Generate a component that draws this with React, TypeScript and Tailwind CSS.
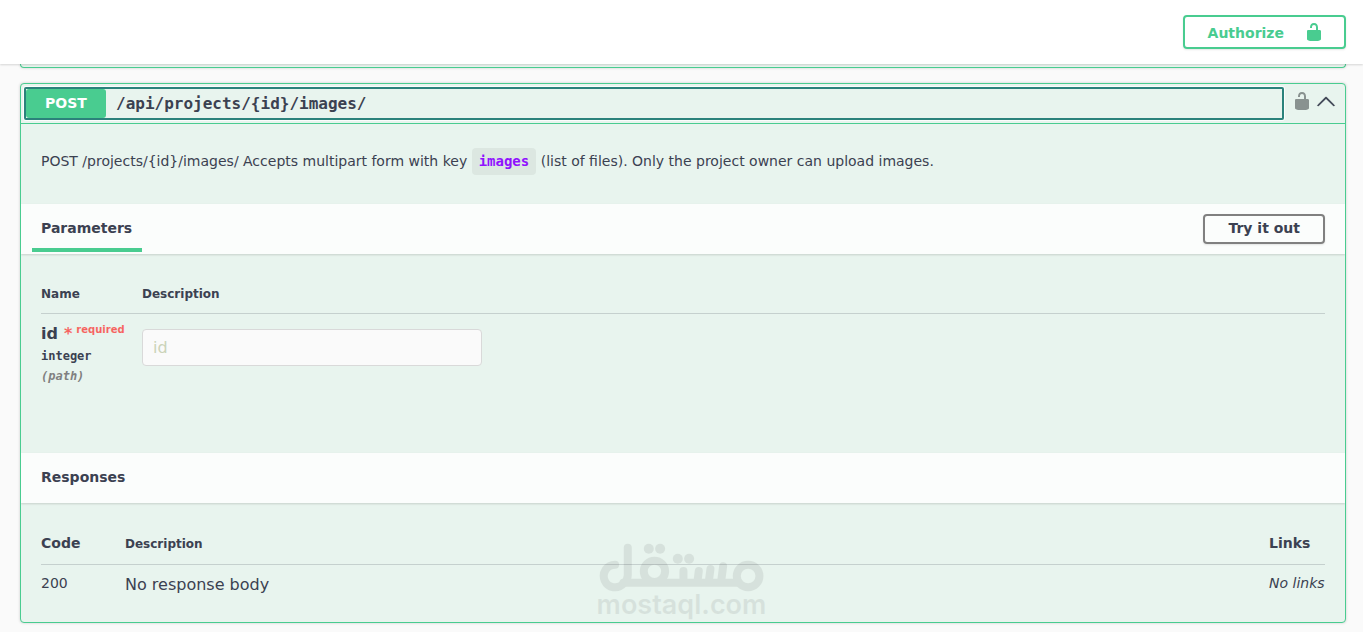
import React from "react";

function UnlockIcon({ className }: { className?: string }) {
  return (
    <svg className={className} width="20" height="20" viewBox="0 0 20 20" fill="currentColor" aria-hidden="true">
      <path d="M15.8 8H14V5.6C14 2.703 12.665 1 10 1 7.334 1 6 2.703 6 5.6V6h2v-.801C8 3.754 8.797 3 10 3c1.203 0 2 .754 2 2.199V8H4c-.553 0-1 .646-1 1.199V17c0 .549.428 1.139.951 1.307l1.197.387C5.672 18.861 6.55 19 7.1 19h5.8c.549 0 1.428-.139 1.951-.307l1.196-.387c.524-.167.953-.757.953-1.306V9.199C17 8.646 16.352 8 15.8 8z" />
    </svg>
  );
}

function ArrowUpIcon() {
  return (
    <svg width="20" height="20" viewBox="0 0 20 20" fill="currentColor" stroke="currentColor" strokeWidth="0.3" aria-hidden="true">
      <path d="M17.418 14.908c.272.268.709.268.979 0s.271-.701 0-.969l-7.908-7.83c-.27-.268-.707-.268-.979 0l-7.908 7.83c-.27.268-.27.701 0 .969.271.268.709.268.979 0L10 7.767l7.418 7.141z" />
    </svg>
  );
}

function Watermark() {
  return (
    <div className="pointer-events-none absolute bottom-3.5 left-1/2 flex -translate-x-1/2 flex-col items-center text-black opacity-[0.07]">
      <svg width="165" height="49" viewBox="55 40 495 147" fill="none" stroke="currentColor" strokeWidth="24" strokeLinecap="round" aria-hidden="true">
        <path d="M103 105A34 34 0 1 0 128 162Q141 152 141 136V54" />
        <path d="M128 159H474" />
        <circle cx="221" cy="125" r="32" />
        <circle cx="502" cy="139" r="34" />
        <path d="M308 124V156M354 124L350 156M389 118L384 156M427 110L421 156" />
        <g fill="currentColor" stroke="none">
          <circle cx="204" cy="57" r="15" />
          <circle cx="238" cy="57" r="15" />
          <circle cx="291" cy="87" r="15" />
          <circle cx="325" cy="87" r="15" />
        </g>
      </svg>
      <span className="font-['Inter',sans-serif] text-[27px] leading-[26px] font-semibold">mostaql.com</span>
    </div>
  );
}

function SectionHeader({ children }: { children: React.ReactNode }) {
  return (
    <div className="flex h-[50px] items-center justify-between bg-[#fbfdfc] pr-5 shadow-[0_1px_2px_rgba(0,0,0,0.15)]">
      {children}
    </div>
  );
}

export default function App() {
  return (
    <div className="relative min-h-screen bg-[#fafafa] pb-[9px] font-['DejaVu_Sans',sans-serif] text-sm text-[#3b4151]">
      <header className="relative z-10 flex h-16 items-center justify-end bg-white pr-[17px] shadow-[0_1px_2px_rgba(0,0,0,0.15)]">
        <button className="flex h-[34px] items-center gap-5 rounded border-2 border-[#49cc90] pr-5 pl-[23px] font-bold text-[#49cc90] shadow-[0_1px_2px_rgba(0,0,0,0.1)]">
          <span className="pt-0.5">Authorize</span>
          <UnlockIcon />
        </button>
      </header>

      <main className="pr-[17px] pl-5">
        <div className="h-1 rounded-b border border-t-0 border-[#49cc90] bg-[#e8f4ee] shadow-[0_0_3px_rgba(0,0,0,0.19)]" />

        <section className="mt-[15px] overflow-hidden rounded border border-[#49cc90] bg-[#e8f4ee] shadow-[0_0_3px_rgba(0,0,0,0.19)]">
          <div className="flex items-center border-b border-[#49cc90] py-[3px] pr-[9px] pl-[3px]">
            <button aria-expanded="true" className="flex h-[33px] grow items-center gap-2.5 rounded-xs border-2 border-[#2b827b] text-left shadow-[0_0_0_1px_rgba(255,255,255,0.8)]">
              <span className="flex h-[29px] w-20 items-center justify-center rounded-[3px] bg-[#49cc90] pb-0.5 font-bold text-white">POST</span>
              <span className="font-['DejaVu_Sans_Mono',monospace] text-base font-bold">/api/projects/&#123;id&#125;/images/</span>
            </button>
            <button aria-label="Authorization button unlocked" className="mb-1.5 ml-2 text-[#899290]">
              <UnlockIcon />
            </button>
            <button aria-label="Collapse operation" className="mb-1.5 ml-1">
              <ArrowUpIcon />
            </button>
          </div>

          <div className="h-20 px-5 pt-6">
            <p className="leading-[27px]">
              POST /projects/&#123;id&#125;/images/ Accepts multipart form with key{" "}
              <code className="inline-block rounded bg-black/5 px-[7px] font-['DejaVu_Sans_Mono',monospace] font-bold text-[#9012fe]">images</code>{" "}
              (list of files). Only the project owner can upload images.
            </p>
          </div>

          <SectionHeader>
            <h4 className="ml-[11px] flex h-full w-[110px] flex-col justify-between pt-3.5 pb-0.5 font-bold">
              <span className="pl-[9px]">Parameters</span>
              <span className="h-1 bg-[#49cc90]" />
            </h4>
            <button className="h-[30px] rounded border-2 border-[#808080] px-[23px] pb-0.5 leading-none font-bold shadow-[0_1px_2px_rgba(0,0,0,0.1)]">
              Try it out
            </button>
          </SectionHeader>

          <div className="h-[199px] px-5 pt-[30px]">
            <table className="w-full border-collapse text-left">
              <thead>
                <tr className="h-[29px] border-b border-[#3b4151]/20 align-top text-xs leading-5">
                  <th className="w-[101px] font-bold">Name</th>
                  <th className="font-bold">Description</th>
                </tr>
              </thead>
              <tbody>
                <tr className="align-top">
                  <td className="pt-2.5">
                    <label htmlFor="param-id" className="flex h-5 gap-1.5 font-bold">
                      <span className="text-base leading-5">id</span>
                      <span className="flex gap-1 text-[#ff0000]/60">
                        <span className="text-base leading-5">*</span>
                        <span className="text-[10px] leading-3">required</span>
                      </span>
                    </label>
                    <div className="pt-0.5 font-['DejaVu_Sans_Mono',monospace] text-xs leading-5 font-bold">integer</div>
                    <div className="font-['DejaVu_Sans_Mono',monospace] text-xs leading-5 font-bold text-[#808080] italic">(path)</div>
                  </td>
                  <td className="pt-[15px]">
                    <input
                      id="param-id"
                      type="text"
                      placeholder="id"
                      disabled
                      className="block h-[37px] w-[340px] rounded border border-[#d9d9d9] bg-[#fafafa] px-2.5 text-base placeholder:text-[#cbd3b8]"
                    />
                  </td>
                </tr>
              </tbody>
            </table>
          </div>

          <SectionHeader>
            <h4 className="pb-0.5 pl-5 font-bold">Responses</h4>
          </SectionHeader>

          <div className="h-[119px] px-5 pt-[30px]">
            <table className="w-full border-collapse text-left">
              <thead>
                <tr className="h-[31px] border-b border-[#3b4151]/20 align-top leading-5">
                  <th className="w-[84px] font-bold">Code</th>
                  <th className="text-xs leading-[22px] font-bold">Description</th>
                  <th className="w-14 font-bold">Links</th>
                </tr>
              </thead>
              <tbody>
                <tr className="align-top leading-5">
                  <td className="pt-2">200</td>
                  <td className="pt-2 text-base leading-6">No response body</td>
                  <td className="pt-2 whitespace-nowrap italic">No links</td>
                </tr>
              </tbody>
            </table>
          </div>
        </section>
      </main>
      <Watermark />
    </div>
  );
}
